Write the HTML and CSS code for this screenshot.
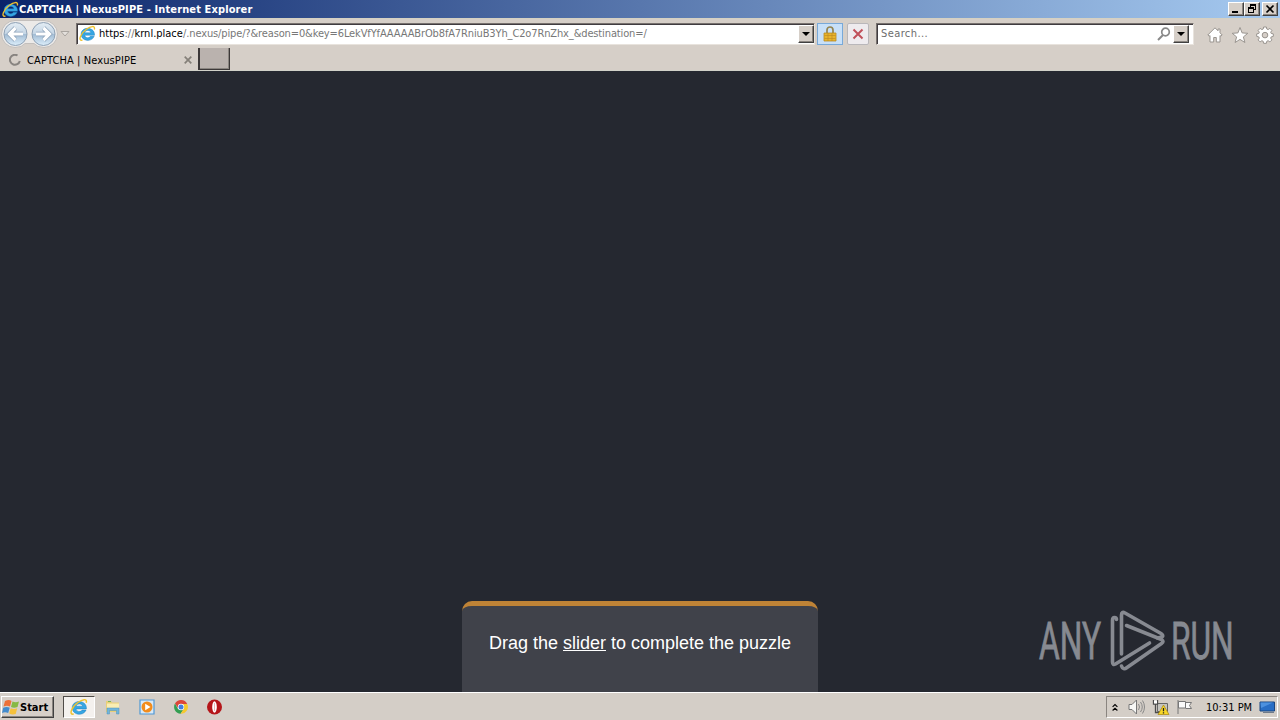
FILE: index.html
```html
<!DOCTYPE html>
<html lang="en">
<head>
  <meta charset="UTF-8" />
  <title>CAPTCHA | NexusPIPE</title>
  <link rel="stylesheet" href="styles.css">
</head>
<body>
  <svg class="defs">
    <symbol id="ie" viewBox="0 0 16 16">
      <path d="M14.600 9.700H5.400c.3 2.700 4.200 3 5.300 1h3.600C11.800 16.700 2 15.300 2 8.700c0-7.700 13.200-7.500 12.600 1zM5.400 7.300h5.700c-.3-2.800-5.200-2.700-5.700 0z" fill="#36a6e3" stroke="#1878b9" stroke-width=".4"/>
      <path d="M3.300 14.300C-1.400 15.300 1.500 7.800 7 4c3.600-2.600 8.600-4.200 7.400.2" fill="none" stroke="#efc22e" stroke-width="1.300"/>
    </symbol>
  </svg>

  <header class="titlebar">
    <svg class="title-icon"><use href="#ie"/></svg>
    <span class="title">CAPTCHA | NexusPIPE - Internet Explorer</span>
    <div class="window-buttons">
      <button><svg viewBox="0 0 14 12"><path d="M3 8h6v2H3z"/></svg></button>
      <button><svg viewBox="0 0 14 12"><path d="M5 1h6v6H9V6h1V3H6v1H5zM3 4h6v6H3zM4 6v3h4V6z" fill-rule="evenodd"/></svg></button>
      <button class="close"><svg viewBox="0 0 14 12"><path d="M3.500 2.500l7 7M10.500 2.500l-7 7" stroke="#000" stroke-width="1.700"/></svg></button>
    </div>
  </header>

  <nav class="toolbar">
    <svg class="nav-buttons" viewBox="0 0 60 30">
      <defs>
        <linearGradient id="ball" x1="0" y1="0" x2="0" y2="1">
          <stop offset="0" stop-color="#e4edf4"/><stop offset=".48" stop-color="#c5d6e5"/>
          <stop offset=".52" stop-color="#a3bdd5"/><stop offset="1" stop-color="#dceefa"/>
        </linearGradient>
      </defs>
      <path d="M15 1.500h29a13.500 13.500 0 0 1 0 27q-7 0-10-4h-9q-3 4-10 4a13.500 13.500 0 0 1 0-27z" fill="#eceae8" stroke="#c3bfbc"/>
      <g fill="url(#ball)" stroke="#8fa2b6"><circle cx="15.500" cy="15" r="11.500"/><circle cx="43.500" cy="15" r="11.500"/></g>
      <g fill="none" stroke="#8ba1b8" stroke-width="4.600"><path d="M15.500 9L9.500 15l6 6M10 15h13"/><path d="M43.500 9l6 6-6 6M49 15H36"/></g>
      <g fill="none" stroke="#fff" stroke-width="3.200"><path d="M15.500 9L9.500 15l6 6M10 15h13"/><path d="M43.500 9l6 6-6 6M49 15H36"/></g>
    </svg>
    <svg class="nav-history" viewBox="0 0 10 8"><path d="M1 1.500h8L5 6z" fill="#e4e0dc" stroke="#aaa5a0"/></svg>
    <div class="address">
      <svg class="address-icon"><use href="#ie"/></svg>
      <span class="url"><span class="dark">https</span>://<b>krnl.place</b>/<span class="path">.nexus/pipe/?&amp;reason=0&amp;key=6LekVfYfAAAAABrOb8fA7RniuB3Yh_C2o7RnZhx_&amp;destination=/</span></span>
      <button class="dropdown"></button>
    </div>
    <button class="tool lock">
      <svg viewBox="0 0 14 18"><path d="M4 8V5a3 3 0 0 1 6 0v3" fill="none" stroke="#948451" stroke-width="1.700"/><path d="M1 8h12v8H1z" fill="#e8b42b" stroke="#b98a22" stroke-width=".8"/><path d="M1.500 10.500h11M1.500 13.500h11M5 8v8M9 8v8" stroke="#c18e22" stroke-width=".7"/></svg>
    </button>
    <button class="tool stop">
      <svg viewBox="0 0 12 12"><path d="M1.500 1.500l9 9M10.500 1.500l-9 9" stroke="#c0505a" stroke-width="2"/></svg>
    </button>
    <div class="search">
      <span class="placeholder">Search...</span>
      <svg class="glass" viewBox="0 0 14 14"><circle cx="8.500" cy="5" r="3.800" fill="none" stroke="#888" stroke-width="1.700"/><path d="M6 8l-5 5" stroke="#888" stroke-width="2"/></svg>
      <button class="dropdown"></button>
    </div>
    <div class="commands">
      <svg viewBox="0 0 18 18"><path d="M9 1.800L1.800 9l1.400 1.200.8-.7V16h3.700v-4.500h2.600V16H14V9.500l.8.700L16.200 9 14 6.800V3h-2v1.800z" fill="#fff" stroke="#99948f"/></svg>
      <svg viewBox="0 0 18 18"><path d="M9 1.500l2.100 5.400 5.700.4-4.400 3.600 1.500 5.600L9 13.400l-4.900 3.100 1.500-5.600L1.200 7.300l5.700-.4z" fill="#fff" stroke="#99948f"/></svg>
      <svg viewBox="0 0 18 18"><path d="M7.600 1h2.800l.4 2 1.300.6 1.800-1.200 2 2-1.200 1.800.5 1.200 2.100.5v2.500l-2.100.5-.5 1.200 1.200 1.800-2 2-1.800-1.200-1.300.6-.4 2H7.600l-.4-2-1.300-.6-1.800 1.200-2-2 1.200-1.800-.5-1.200-2.100-.5V7.900l2.100-.5.500-1.200-1.200-1.800 2-2 1.800 1.200 1.300-.6z" fill="#fff" stroke="#99948f"/><circle cx="9" cy="9.100" r="2.800" fill="#d5cec8" stroke="#99948f"/></svg>
    </div>
  </nav>

  <div class="tabs">
    <div class="tab">
      <svg class="spinner" viewBox="0 0 12 12"><path d="M8.500 1.500A5 5 0 1 0 10.800 7" fill="none" stroke="#888480" stroke-width="2"/></svg>
      <span class="tab-title">CAPTCHA | NexusPIPE</span>
      <svg class="tab-close" viewBox="0 0 8 8"><path d="M.7.700l6.600 6.600M7.300.700L.7 7.300" stroke="#858079" stroke-width="1.700"/></svg>
    </div>
    <button class="new-tab"></button>
  </div>

  <main>
    <section class="captcha">
      <p>Drag the <u>slider</u> to complete the puzzle</p>
    </section>
    <div class="watermark">
      <span class="word"><span>ANY</span></span>
      <svg class="mark" viewBox="74 4 58 64">
        <path d="M85.500 49V10q0-4 3.500-2l36 20.500q3 2 1 3.500l-4.500 1"/>
        <path d="M80.500 14.500q0-2-2-2-2 0-2 3V57q0 3.500 3 2l34-21"/>
        <path d="M90.500 20.500l35 14q3 2 0 4L91 62.500q-4 3-5.500-1.500"/>
      </svg>
      <span class="word"><span>RUN</span></span>
    </div>
  </main>

  <footer class="taskbar">
    <button class="start">
      <svg viewBox="0 0 18 16"><path d="M3 2q4-2 6.500 0L8 7.500Q5 6 1.500 7.500z" fill="#ed7038"/><path d="M10.500 2.500q3 1.500 6.500 0L15.500 8Q12 9.500 9 8z" fill="#86b944"/><path d="M1.200 8.700q3.600-1.500 6.500 0L6.200 14Q3 12.500 0 14z" fill="#438bcd"/><path d="M8.700 9.200q3.300 1.500 6.500 0L13.700 15q-3.500 1-6.500-.500z" fill="#f5c13c"/></svg>
      <span>Start</span>
    </button>
    <div class="quick">
      <div class="app active"><svg><use href="#ie"/></svg></div>
      <div class="app">
        <svg viewBox="0 0 16 16"><path d="M1 2h5l1 1.500h7V13H1z" fill="#e9cf78"/><path d="M2 4.500h12V9H2z" fill="#f9edb3"/><path d="M2 9h12v6h-2.500v-3.500h-7V15H2z" fill="#70b5dc" stroke="#4e93b9" stroke-width=".5"/><path d="M3 2h3v1H3z" fill="#77b55a"/></svg>
      </div>
      <div class="app">
        <svg viewBox="0 0 16 16"><path d="M1 1h14v14H1z" fill="#d8e9f7" stroke="#4f98d5" stroke-width="1.200"/><circle cx="8" cy="8" r="5.500" fill="#f28c1c"/><path d="M6.200 4.800v6.400L11.500 8z" fill="#fff"/></svg>
      </div>
      <div class="app">
        <svg viewBox="0 0 16 16"><path d="M2 4.600A6.800 6.800 0 0 1 14.200 5H8L5 9z" fill="#dc4639"/><path d="M2 4.600A6.800 6.800 0 0 0 7.600 14.800L11 9.500 5 10z" fill="#339e52"/><path d="M14.200 5a6.800 6.800 0 0 1-6.600 9.800L11 9.500 9 5z" fill="#f5c92e"/><circle cx="8" cy="8" r="3.200" fill="#fff"/><circle cx="8" cy="8" r="2.500" fill="#427ee0"/></svg>
      </div>
      <div class="app">
        <svg viewBox="0 0 16 16"><circle cx="7.500" cy="8" r="7.500" fill="#b51519"/><ellipse cx="7.500" cy="8" rx="2.300" ry="5.800" fill="#fff"/><path d="M7.500 4v8" stroke="#e9a4a4" stroke-width=".8"/></svg>
      </div>
    </div>
    <div class="tray">
      <svg class="chevrons" viewBox="0 0 7 9"><path d="M.7 3.800l2.800-2.600 2.800 2.600M.7 8l2.800-2.600L6.300 8" fill="none" stroke="#000" stroke-width="1.400"/></svg>
      <svg viewBox="0 0 18 16"><path d="M1 5.500h3L8.500 1v14L4 10.500H1z" fill="#f7f7f5" stroke="#777"/><path d="M10.500 5q2 3 0 6M12.500 3q3.500 5 0 10M14.500 1.500q4 6.500 0 13" fill="none" stroke="#888"/></svg>
      <svg viewBox="0 0 18 16"><path d="M5.500 4.500h10v8h-10z" fill="#c6c5bf" stroke="#666"/><path d="M1.500 1v4h4V1M3.500 5v8.500h7" fill="none" stroke="#4c4c4c" stroke-width="1.300"/><path d="M2 1.500h3v3H2z" fill="#fff"/><path d="M11.500 6L17 15.500H6z" fill="#f8d727" stroke="#a9850b" stroke-width=".7"/><path d="M11.500 9v3.200m0 1v1.300" stroke="#222" stroke-width="1.300"/></svg>
      <svg viewBox="0 0 18 16"><path d="M2 1v14M2.500 2.500h7v6.500h-7zM9.500 3.500h6l-2 3 2 3h-6" fill="#fafafa" stroke="#777"/></svg>
      <span class="clock">10:31 PM</span>
      <svg class="desktop" viewBox="0 0 16 16"><path d="M1 3h14.500v9H1z" fill="#286ec5" stroke="#1b4680"/><path d="M1.500 3.500H14L2 9z" fill="#4c91df"/><path d="M4 13.500h11" stroke="#707b8a"/></svg>
    </div>
  </footer>
</body>
</html>
```
FILE: styles.css
```css
* {
  box-sizing: border-box;
}
body {
  margin: 0;
  width: 1280px;
  height: 720px;
  overflow: hidden;
  display: flex;
  flex-direction: column;
  background: #d6cfc8;
  font-family: 'DejaVu Sans Condensed', 'DejaVu Sans', sans-serif;
  font-size: 11px;
  color: #000;
}
svg {
  display: block;
  flex: none;
}
.defs {
  position: absolute;
  width: 0;
  height: 0;
}
button {
  flex: none;
  padding: 0;
  font: inherit;
  background: #d6cfc8;
  border: 1px solid;
  border-color: #fff #404040 #404040 #fff;
  box-shadow: inset -1px -1px #8a8580;
}

/* Title bar */
.titlebar {
  height: 18px;
  flex: none;
  display: flex;
  align-items: center;
  padding: 0 2px;
  background: linear-gradient(90deg, #0a246a, #a6caf0);
  color: #fff;
}
.title-icon {
  width: 17px;
  height: 17px;
}
.title {
  font-weight: 700;
  white-space: nowrap;
  letter-spacing: 0.12px;
}
.window-buttons {
  display: flex;
  margin-left: auto;
}
.window-buttons button {
  width: 16px;
  height: 14px;
}
.window-buttons .close {
  margin-left: 2px;
}
.window-buttons svg {
  width: 14px;
  height: 12px;
}

/* Toolbar */
.toolbar {
  height: 30px;
  flex: none;
  display: flex;
  align-items: center;
  border-top: 1px solid #d5d1c2;
}
.nav-buttons {
  width: 60px;
  height: 30px;
}
.nav-history {
  width: 10px;
  height: 8px;
  margin-right: 6px;
}
.address,
.search {
  display: flex;
  align-items: center;
  height: 22px;
  background: #fff;
  border: 1px solid;
  border-color: #77716e #e8e3dd #e8e3dd #77716e;
  box-shadow: inset 1px 1px #403c40;
}
.address {
  width: 739px;
}
.address-icon {
  width: 17px;
  height: 17px;
  margin: 0 3px 0 2px;
}
.url {
  flex: 1;
  white-space: nowrap;
  color: #777;
}
.url .dark,
.url b {
  color: #000;
  font-weight: 400;
}
.path {
  letter-spacing: -0.13px;
}
.dropdown {
  width: 16px;
  height: 18px;
  display: grid;
  place-items: center;
}
.dropdown::after {
  content: '';
  border: 4px solid transparent;
  border-top-color: #000;
  border-bottom: 0;
}
.tool {
  height: 22px;
  display: grid;
  place-items: center;
  box-shadow: none;
}
.lock {
  width: 26px;
  margin-left: 2px;
  border-color: #78a9d9;
  background: #c8e0f8;
}
.lock svg {
  width: 14px;
  height: 18px;
}
.stop {
  width: 22px;
  margin: 0 7px 0 4px;
  border-color: #b9b7ba;
  border-radius: 2px;
  background: #eeebee;
}
.stop svg {
  width: 12px;
  height: 12px;
}
.search {
  width: 318px;
  padding: 0 4px;
}
.placeholder {
  flex: 1;
  color: #6d6d6d;
  letter-spacing: 0.4px;
}
.glass {
  width: 14px;
  height: 14px;
  margin-right: 2px;
}
.commands {
  display: flex;
  gap: 7px;
  margin: 2px 0 0 12px;
}
.commands svg {
  width: 18px;
  height: 18px;
}

/* Tabs */
.tabs {
  height: 23px;
  flex: none;
  display: flex;
  border-bottom: 1px solid #d1d1c8;
}
.tab {
  width: 198px;
  display: flex;
  align-items: center;
  padding: 2px 6px 0 9px;
}
.spinner {
  width: 12px;
  height: 12px;
  margin-right: 6px;
}
.tab-title {
  flex: 1;
  white-space: nowrap;
  letter-spacing: 0.1px;
}
.tab-close {
  width: 8px;
  height: 8px;
}
.new-tab {
  width: 32px;
  height: 22px;
  background: #bab2ae;
  border-width: 0 1px 1px 2px;
  border-color: #3c3838;
}

/* Page */
main {
  position: relative;
  flex: 1;
  display: flex;
  align-items: flex-end;
  justify-content: center;
  background: #252830;
}
.captcha {
  width: 356px;
  height: 91px;
  border-top: 5px solid #bf8336;
  border-radius: 10px 10px 0 0;
  background: #40424a;
  color: #fff;
  font-family: 'Liberation Sans', Arial, sans-serif;
  font-size: 18px;
  line-height: 22px;
  text-align: center;
}
.captcha p {
  margin: 26px 0 0;
  white-space: nowrap;
}
.captcha u {
  text-decoration: none;
  display: inline-block;
  height: 19px;
  border-bottom: 1px solid #fff;
}
.watermark {
  position: absolute;
  right: 46px;
  bottom: 19px;
  height: 64px;
  display: flex;
  align-items: center;
}
.word {
  width: 63px;
  padding-top: 2px;
  font-family: Roboto, sans-serif;
  font-size: 52px;
  line-height: 60px;
  color: #878a91;
}
.word span {
  display: inline-block;
  transform: scaleX(0.61);
  transform-origin: left;
  -webkit-text-stroke: 0.8px #878a91;
}
.mark {
  width: 58px;
  height: 64px;
  margin: 0 3px 0 8px;
  fill: none;
  stroke: #878a91;
  stroke-width: 3.6;
  stroke-linejoin: round;
  stroke-linecap: round;
}

/* Taskbar */
.taskbar {
  height: 28px;
  flex: none;
  display: flex;
  align-items: center;
  padding-top: 1px;
  border-top: 1px solid #fff;
  background: #d4cec7;
}
.start {
  width: 53px;
  height: 22px;
  margin-left: 1px;
  display: flex;
  align-items: center;
  font-weight: 700;
}
.start svg {
  width: 18px;
  height: 16px;
}
.quick {
  display: flex;
  gap: 2px;
  margin-left: 9px;
}
.app {
  width: 32px;
  height: 22px;
  display: grid;
  place-items: center;
}
.app svg {
  width: 16px;
  height: 16px;
}
.active {
  background: #f4f1ee;
  border: 1px solid;
  border-color: #504c48 #fff #fff #504c48;
}
.active svg {
  width: 18px;
  height: 18px;
}
.tray {
  width: 172px;
  height: 22px;
  margin: 0 2px 0 auto;
  display: flex;
  align-items: center;
  gap: 6px;
  padding-left: 5px;
  border: 1px solid;
  border-color: #8a8580 #fff #fff #8a8580;
}
.tray svg {
  width: 18px;
  height: 16px;
}
.tray .chevrons {
  width: 6px;
  height: 9px;
  margin-right: 4px;
}
.clock {
  margin: 0 1px 0 6px;
  white-space: nowrap;
}
.tray .desktop {
  width: 16px;
}
```
